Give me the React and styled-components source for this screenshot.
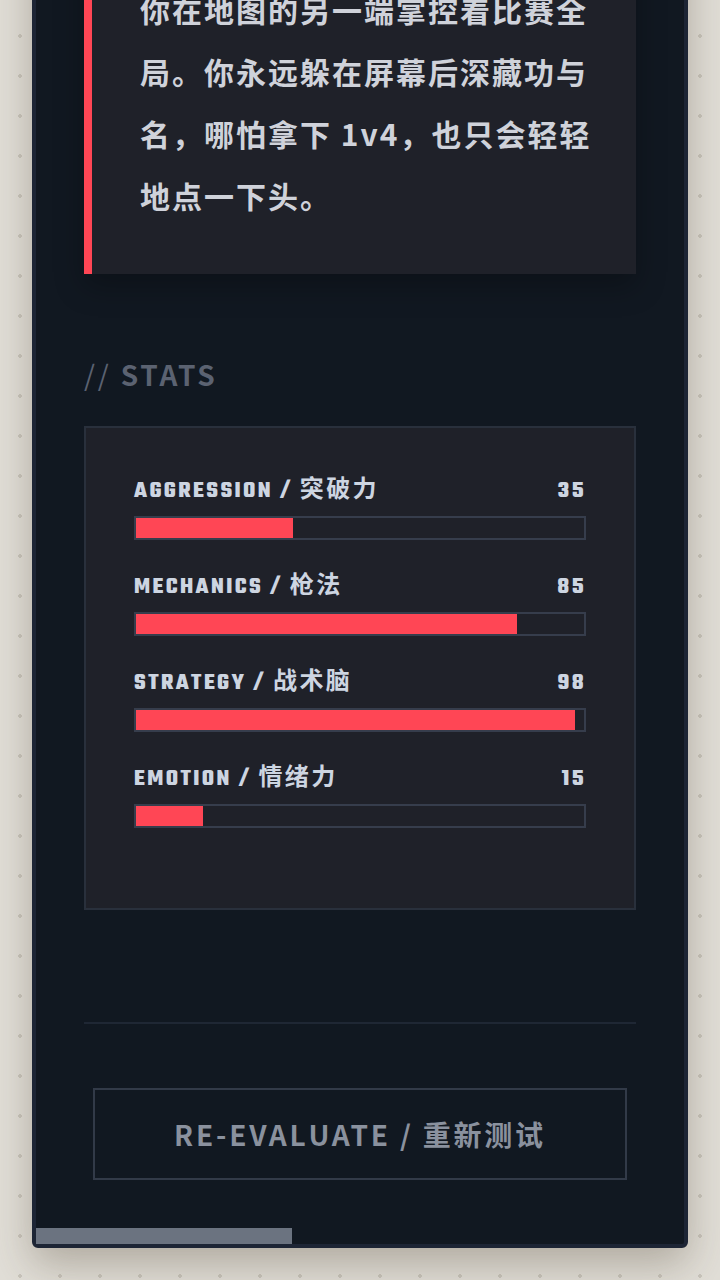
import React from "react";
import styled, { createGlobalStyle } from "styled-components";

const GlobalStyle = createGlobalStyle`
  * { box-sizing: border-box; }
  html, body { margin: 0; padding: 0; }
  body {
    background-color: #e1ded7;
    background-image: radial-gradient(circle, #c9c5bc 1.6px, transparent 2px);
    background-size: 40px 40px;
    background-position: 0 16px;
    font-family: "Noto Sans CJK SC", "Noto Sans", sans-serif;
  }
`;

const Page = styled.div`
  height: 100vh;
  padding: 32px;
  display: flex;
  flex-direction: column;
  justify-content: flex-end;
  overflow: hidden;
`;

const Card = styled.main`
  flex: none;
  background: #111821;
  border: 4px solid #1d2535;
  border-radius: 6px;
  box-shadow: 0 16px 40px rgba(70, 60, 40, 0.32);
  display: flex;
  flex-direction: column;
`;

const Body = styled.div`
  padding: 48px 48px 0;
  display: flex;
  flex-direction: column;
`;

const Eyebrow = styled.div`
  font-family: "Teko", "Noto Sans CJK SC", sans-serif;
  font-size: 22px;
  letter-spacing: 4px;
  color: #ff4655;
  margin-bottom: 8px;
`;

const Title = styled.h1`
  margin: 0 0 48px;
  font-family: "Noto Sans CJK SC", sans-serif;
  font-size: 56px;
  font-weight: 900;
  color: #e5e7eb;
  letter-spacing: 2px;
`;

const Quote = styled.blockquote`
  margin: 0;
  background: #1f2129;
  border-left: 8px solid #ff4655;
  padding: 48px 44px 48px 48px;
  box-shadow: 0 12px 28px rgba(0, 0, 0, 0.28);
`;

const QuoteText = styled.p`
  margin: 0;
  font-size: 30px;
  font-weight: 700;
  line-height: 62px;
  letter-spacing: 2px;
  color: #cfd2da;
`;

const SectionTitle = styled.h2`
  margin: 80px 0 32px;
  font-size: 28px;
  font-weight: 700;
  letter-spacing: 2.8px;
  color: #5b6271;
  line-height: 40px;
`;

const Slashes = styled.span`
  font-weight: 400;
`;

const StatsPanel = styled.section`
  background: #1f2129;
  border: 2px solid #29303c;
  padding: 48px 48px 48px;
`;

const StatRow = styled.div`
  margin-bottom: 32px;
`;

const StatHead = styled.div`
  display: flex;
  justify-content: space-between;
  align-items: center;
  font-family: "Teko", "Noto Sans CJK SC", sans-serif;
  font-weight: 700;
  font-size: 24px;
  letter-spacing: 0.1em;
  line-height: 26px;
  color: #cdd5e1;
  padding-top: 2px;
  margin-bottom: 12px;
`;

const StatValue = styled.span``;

const Track = styled.div`
  height: 24px;
  border: 2px solid #363d4c;
  background: #1f2129;
`;

const Fill = styled.div`
  height: 100%;
  background: #ff4655;
`;

const Divider = styled.hr`
  margin: 112px 0 0;
  border: 0;
  height: 2px;
  background: #1f2734;
`;

const Button = styled.button`
  margin: 64px 9px 0;
  height: 92px;
  background: transparent;
  border: 2px solid #323a48;
  color: #8a919e;
  font-family: "Noto Sans CJK SC", sans-serif;
  font-size: 28px;
  font-weight: 700;
  letter-spacing: 2.8px;
  cursor: pointer;
`;

const Footer = styled.div`
  margin-top: 48px;
  height: 16px;
  display: flex;
`;

const Progress = styled.div`
  width: ${p => p.$w}px;
  background: #6b7380;
`;

const stats = [
  { en: "AGGRESSION", zh: "突破力", v: 35 },
  { en: "MECHANICS", zh: "枪法", v: 85 },
  { en: "STRATEGY", zh: "战术脑", v: 98 },
  { en: "EMOTION", zh: "情绪力", v: 15 },
];

export default function App() {
  return (
    <>
      <GlobalStyle />
      <Page>
        <Card>
          <Body>
            <Eyebrow>// AGENT PROFILE</Eyebrow>
            <Title>幕后指挥官</Title>
            <Quote>
              <QuoteText>
                当队友在前线厮杀的时候，
                <br />
                你在地图的另一端掌控着比赛全局。你永远躲在屏幕后深藏功与名，哪怕拿下 1v4，也只会轻轻地点一下头。
              </QuoteText>
            </Quote>
            <SectionTitle>
              <Slashes>//</Slashes> STATS
            </SectionTitle>
            <StatsPanel>
              {stats.map((s) => (
                <StatRow key={s.en}>
                  <StatHead>
                    <span>
                      {s.en} / {s.zh}
                    </span>
                    <StatValue>{s.v}</StatValue>
                  </StatHead>
                  <Track>
                    <Fill style={{ width: `${s.v}%` }} />
                  </Track>
                </StatRow>
              ))}
            </StatsPanel>
            <Divider />
            <Button>RE-EVALUATE / 重新测试</Button>
          </Body>
          <Footer>
            <Progress $w={256} />
          </Footer>
        </Card>
      </Page>
    </>
  );
}
